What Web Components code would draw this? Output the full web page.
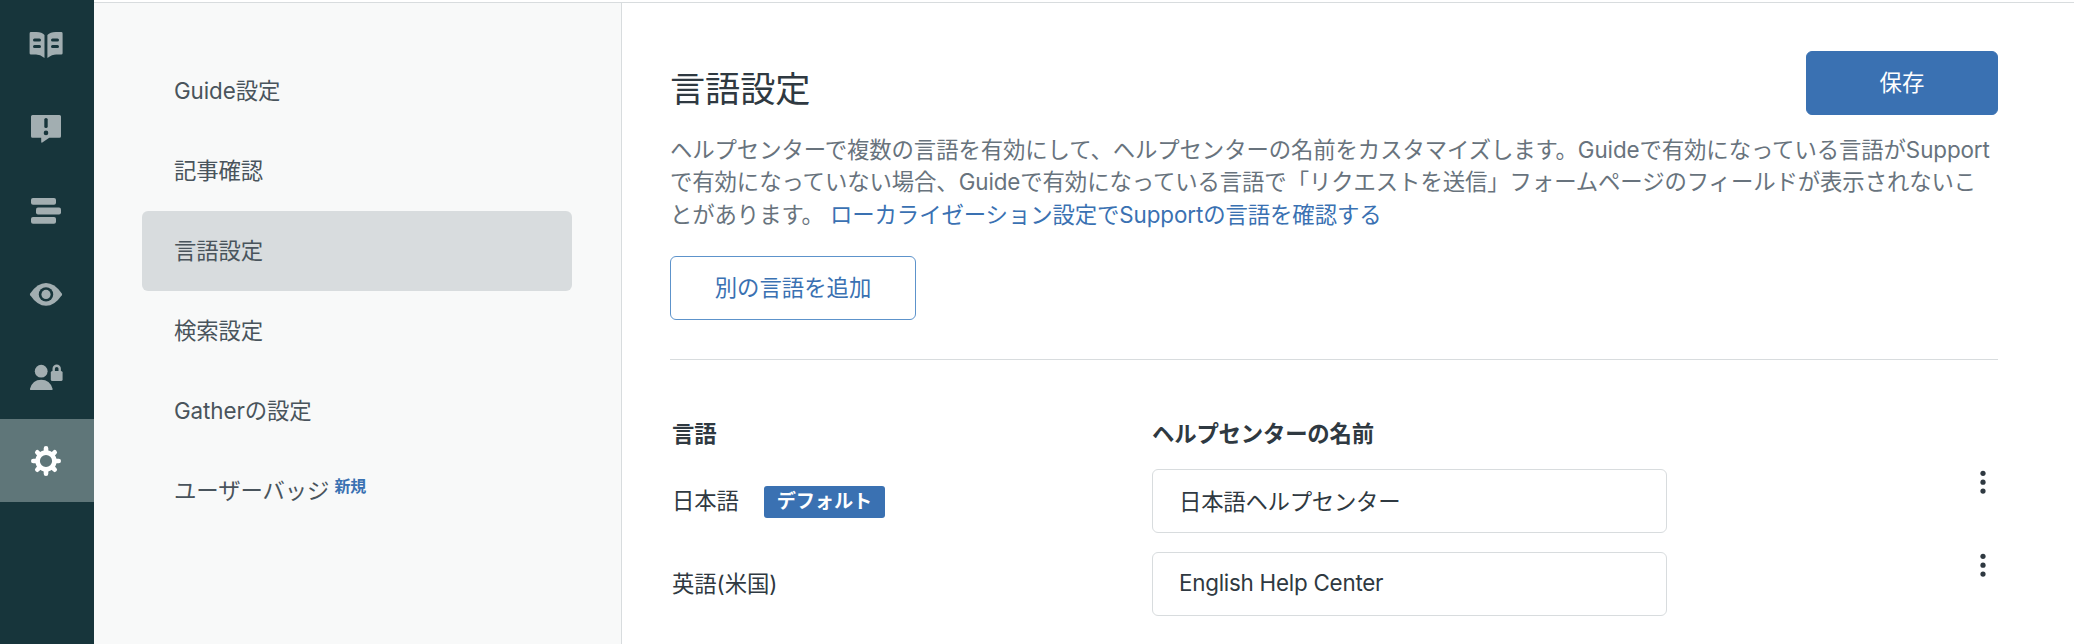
<!DOCTYPE html>
<html lang="ja">
<head>
<meta charset="utf-8">
<title>言語設定</title>
<style>
  body {
    margin: 0;
    background: #fff;
    color: #2f3941;
    font-family: Inter, "Noto Sans CJK JP", sans-serif;
    font-size: 22.4px;
    letter-spacing: -0.1px;
    text-autospace: no-autospace;
  }
</style>
</head>
<body>
<guide-app>
  <icon-rail slot="rail">
    <rail-item icon="book"></rail-item>
    <rail-item icon="alert"></rail-item>
    <rail-item icon="arrange"></rail-item>
    <rail-item icon="eye"></rail-item>
    <rail-item icon="permissions"></rail-item>
    <rail-item icon="gear" active></rail-item>
  </icon-rail>
  <settings-nav slot="nav">
    <nav-item>Guide設定</nav-item>
    <nav-item>記事確認</nav-item>
    <nav-item active>言語設定</nav-item>
    <nav-item>検索設定</nav-item>
    <nav-item>Gatherの設定</nav-item>
    <nav-item>ユーザーバッジ<span slot="flag">新規</span></nav-item>
  </settings-nav>
  <settings-header>
    <span slot="title">言語設定</span>
    <ui-button slot="action" primary>保存</ui-button>
    ヘルプセンターで複数の言語を有効にして、ヘルプセンターの名前をカスタマイズします。Guideで有効になっている言語がSupport<br>で有効になっていない場合、Guideで有効になっている言語で「リクエストを送信」フォームページのフィールドが表示されないこ<br>とがあります。 <text-link>ローカライゼーション設定でSupportの言語を確認する</text-link>
    <ui-button slot="footer">別の言語を追加</ui-button>
  </settings-header>
  <language-table>
    <span slot="language">言語</span>
    <span slot="name">ヘルプセンターの名前</span>
    <language-row value="日本語ヘルプセンター">日本語<ui-tag slot="tag">デフォルト</ui-tag></language-row>
    <language-row value="English Help Center">英語(米国)</language-row>
  </language-table>
</guide-app>

<script>
const icons = {
  book: `
    <path d="M31 28H36.5Q42 28 44.5 31V54Q40 50.6 36 50.6H31Q29.6 50.6 29.6 49.2V29.4Q29.6 28 31 28Z"/>
    <path d="M61.2 28H55.7Q50.2 28 47.4 31V54Q52.2 50.6 56.2 50.6H61.2Q62.6 50.6 62.6 49.2V29.4Q62.6 28 61.2 28Z"/>
    <path class="cut" d="M34.5 36H39.5M34.5 42.5H39.5M52.5 36H57.5M52.5 42.5H57.5" stroke-width="3"/>`,
  alert: `
    <path d="M32.5 28H59.5Q61 28 61 29.5V49.3Q61 50.8 59.5 50.8H49.3L42.3 55.5Q41.2 56 41.2 54.8V50.8H32.5Q31 50.8 31 49.3V29.5Q31 28 32.5 28Z"/>
    <path class="cut" d="M46 32.6V39.4" stroke-width="3.4"/>
    <circle class="hole" cx="46" cy="45.9" r="2.3"/>`,
  arrange: `
    <rect x="31" y="28" width="25" height="6.8" rx="2"/>
    <rect x="36" y="37.6" width="25" height="6.8" rx="2"/>
    <rect x="31" y="47" width="25" height="6.8" rx="2"/>`,
  eye: `
    <path d="M30.2 40.4Q37.5 30 46 30T61.8 40.4Q62.4 41.3 61.8 42.2Q54.5 52.8 46 52.8T30.2 42.2Q29.6 41.3 30.2 40.4Z"/>
    <circle class="hole" cx="46" cy="41.4" r="7.2"/>
    <circle cx="46" cy="41.4" r="4.6"/>`,
  permissions: `
    <circle cx="41.2" cy="35.2" r="6.4"/>
    <path d="M30.8 54Q29.6 54 30 52.8Q32.5 43.8 41.2 43.8T52.6 52.8Q53 54 51.8 54Z"/>
    <rect x="50.8" y="35" width="11.8" height="10" rx="1.6"/>
    <path d="M53.7 36V32.8A3 3 0 0 1 59.7 32.8V36" fill="none" stroke="currentColor" stroke-width="2.4"/>`,
  gear: `
    <path fill-rule="evenodd" d="M46 31.3A10.7 10.7 0 1 0 46 52.7A10.7 10.7 0 1 0 46 31.3ZM46 35.9A6.1 6.1 0 1 1 46 48.1A6.1 6.1 0 1 1 46 35.9Z"/>
    <path d="M46 33V29.3M46 51V54.7M37 42H33.3M55 42H58.7M39.6 35.6L37.3 33.3M52.4 35.6L54.7 33.3M39.6 48.4L37.3 50.7M52.4 48.4L54.7 50.7" stroke="currentColor" stroke-width="4.6" stroke-linecap="round"/>`,
};

class BaseElement extends HTMLElement {
  constructor() {
    super();
    this.attachShadow({ mode: "open" });
  }

  connectedCallback() {
    this.shadowRoot.innerHTML = this.render();
  }
}

class GuideApp extends BaseElement {
  render() {
    return `
      <style>
        :host {
          display: grid;
          grid-template-columns: 94px 528px minmax(0, 1fr);
          height: 644px;
          overflow: hidden;
        }
        .nav, main {
          box-sizing: border-box;
          margin-top: 2px;
          border-top: 1px solid #d8dcde;
        }
        .nav {
          background: #f8f9f9;
          border-right: 1px solid #d8dcde;
        }
        main {
          padding: 48px 76px 0 48px;
        }
      </style>
      <slot name="rail"></slot>
      <div class="nav"><slot name="nav"></slot></div>
      <main><slot></slot></main>
    `;
  }
}

class IconRail extends BaseElement {
  render() {
    return `
      <style>
        :host {
          display: flex;
          flex-direction: column;
          box-sizing: border-box;
          padding-top: 4px;
          background: #17353b;
          --rail: #17353b;
        }
      </style>
      <slot></slot>
    `;
  }
}

class RailItem extends BaseElement {
  render() {
    return `
      <style>
        :host {
          display: block;
          height: 83px;
          color: #a2aeb1;
        }
        :host([active]) {
          background: #5f7679;
          color: #fff;
        }
        svg {
          display: block;
          fill: currentColor;
        }
        .cut {
          stroke: var(--rail);
          stroke-linecap: round;
        }
        .hole {
          fill: var(--rail);
        }
      </style>
      <svg width="94" height="83" viewBox="0 0 94 83">${icons[this.getAttribute("icon")]}</svg>
    `;
  }
}

class SettingsNav extends BaseElement {
  render() {
    return `
      <style>
        :host {
          display: flex;
          flex-direction: column;
          padding: 48px 49px 0 48px;
        }
      </style>
      <slot></slot>
    `;
  }
}

class NavItem extends BaseElement {
  render() {
    return `
      <style>
        :host {
          display: flex;
          align-items: center;
          box-sizing: border-box;
          height: 80px;
          padding: 0 0 4px 32px;
          border-radius: 6px;
          color: #49545c;
          white-space: nowrap;
        }
        :host([active]) {
          background: #d8dcde;
        }
        ::slotted([slot="flag"]) {
          margin: -8px 0 0 5px;
          font-size: 16px;
          font-weight: 700;
          color: #3a71b2;
        }
      </style>
      <div><slot></slot></div>
      <slot name="flag"></slot>
    `;
  }
}

class TextLink extends BaseElement {
  render() {
    return `
      <style>
        :host {
          display: inline;
          color: #3a71b2;
        }
      </style>
      <slot></slot>
    `;
  }
}

class UiButton extends BaseElement {
  render() {
    return `
      <style>
        :host {
          display: inline-flex;
        }
        button {
          box-sizing: border-box;
          width: 246px;
          height: 64px;
          padding: 0 0 4px;
          border: 1px solid #5d93cb;
          border-radius: 6px;
          background: #fff;
          color: #3a71b2;
          font: inherit;
        }
        :host([primary]) button {
          width: 192px;
          border-color: #3a71b2;
          background: #3a71b2;
          color: #fff;
        }
      </style>
      <button type="button"><slot></slot></button>
    `;
  }
}

class SettingsHeader extends BaseElement {
  render() {
    return `
      <style>
        :host {
          display: block;
          height: 308px;
          border-bottom: 1px solid #d8dcde;
        }
        .top {
          display: flex;
          justify-content: space-between;
          height: 64px;
        }
        h1 {
          margin: 0;
          padding-top: 6px;
          font-size: 35.2px;
          font-weight: 400;
          line-height: 64px;
        }
        p {
          margin: 19px 0 25px;
          line-height: 32.4px;
          color: #68737d;
          white-space: nowrap;
        }
      </style>
      <div class="top">
        <h1><slot name="title"></slot></h1>
        <slot name="action"></slot>
      </div>
      <p><slot></slot></p>
      <slot name="footer"></slot>
    `;
  }
}

class LanguageTable extends BaseElement {
  render() {
    return `
      <style>
        :host {
          display: flex;
          flex-direction: column;
          gap: 19px;
          padding-top: 56px;
        }
        .head {
          display: grid;
          grid-template-columns: 482px 1fr;
          height: 34px;
          line-height: 35px;
          font-weight: 700;
          letter-spacing: -0.2px;
        }
        .head slot[name="language"] {
          display: block;
          padding-left: 2px;
        }
      </style>
      <div class="head">
        <slot name="language"></slot>
        <slot name="name"></slot>
      </div>
      <slot></slot>
    `;
  }
}

class LanguageRow extends BaseElement {
  render() {
    return `
      <style>
        :host {
          display: grid;
          grid-template-columns: 480px 515px 1fr;
          height: 64px;
          padding-left: 2px;
        }
        .language {
          display: flex;
          align-items: center;
          gap: 25px;
        }
        .language span {
          padding-bottom: 4px;
        }
        input {
          box-sizing: border-box;
          height: 64px;
          padding: 0 26px 3px;
          border: 1px solid #d8dcde;
          border-radius: 6px;
          background: #fff;
          color: #2f3941;
          font: inherit;
          letter-spacing: -0.25px;
        }
        svg {
          justify-self: end;
          margin-right: 12px;
          fill: #2f3941;
        }
      </style>
      <div class="language"><span><slot></slot></span><slot name="tag"></slot></div>
      <input type="text" value="${this.getAttribute("value")}">
      <svg width="6" height="26" viewBox="0 0 6 26">
        <circle cx="3" cy="4.3" r="2.6"/>
        <circle cx="3" cy="13.2" r="2.6"/>
        <circle cx="3" cy="22.1" r="2.6"/>
      </svg>
    `;
  }
}

class UiTag extends BaseElement {
  render() {
    return `
      <style>
        :host {
          display: block;
          width: 121px;
          height: 32px;
          margin-top: 2px;
          border-radius: 3px;
          background: #3a71b2;
          color: #fff;
          font-size: 19.2px;
          font-weight: 700;
          line-height: 31px;
          text-align: center;
        }
      </style>
      <slot></slot>
    `;
  }
}

customElements.define("guide-app", GuideApp);
customElements.define("icon-rail", IconRail);
customElements.define("rail-item", RailItem);
customElements.define("settings-nav", SettingsNav);
customElements.define("nav-item", NavItem);
customElements.define("text-link", TextLink);
customElements.define("ui-button", UiButton);
customElements.define("settings-header", SettingsHeader);
customElements.define("language-table", LanguageTable);
customElements.define("language-row", LanguageRow);
customElements.define("ui-tag", UiTag);
</script>
</body>
</html>
